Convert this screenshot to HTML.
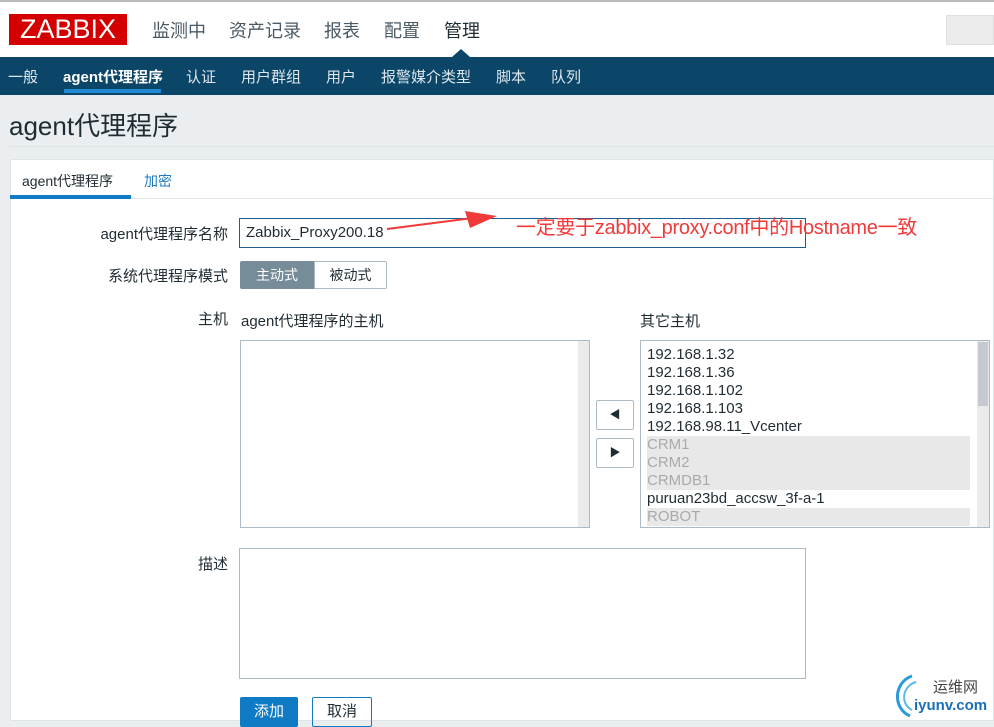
<!DOCTYPE html>
<html><head><meta charset="utf-8"><style>
*{box-sizing:border-box;margin:0;padding:0}
body{width:994px;height:721px;overflow:hidden;background:#ebeef0;font-family:"Liberation Sans","Noto Sans CJK SC",sans-serif;position:relative;color:#1f2c33}
.a{position:absolute}
.hdr{left:0;top:0;width:994px;height:57px;background:#fff;border-top:2px solid #bbb}
.logo{left:9px;top:14px;width:118px;height:31px;background:#d40000;color:#fff;font-size:27px;line-height:31px;text-align:center;letter-spacing:0px}
.top{top:17px;font-size:18px;color:#4a5a64}
.nav{left:0;top:57px;width:994px;height:38px;background:#0b4568}
.nav span{position:absolute;top:9px;font-size:15px;color:#dde7ee}
.tri{left:452px;top:49px;width:0;height:0;border-left:9px solid transparent;border-right:9px solid transparent;border-bottom:8px solid #0b4568}
.lbl{font-size:15px;text-align:right;width:200px;left:28px}
.box{border:1px solid #acbbc3;background:#fff}
.row{left:647px;width:323px;height:18px;font-size:15px;line-height:18px}
.g{background:#e8e8e8;color:#aaa}
.btn{border:1px solid #acbbc3;border-radius:2px;background:#fff;font-size:14px;text-align:center}
</style></head><body>
<div class="a hdr"></div>
<div class="a logo">ZABBIX</div>
<div class="a top" style="left:152px">监测中</div>
<div class="a top" style="left:229px">资产记录</div>
<div class="a top" style="left:324px">报表</div>
<div class="a top" style="left:384px">配置</div>
<div class="a top" style="left:444px;color:#1f2c33">管理</div>
<div class="a" style="left:946px;top:15px;width:48px;height:30px;background:#ebebeb;border:1px solid #e0e0e0"></div>
<div class="a tri"></div>
<div class="a nav">
<span style="left:8px">一般</span>
<span style="left:63px;color:#fff;font-weight:bold">agent代理程序</span>
<span style="left:186px">认证</span>
<span style="left:241px">用户群组</span>
<span style="left:326px">用户</span>
<span style="left:381px">报警媒介类型</span>
<span style="left:496px">脚本</span>
<span style="left:551px">队列</span>
<div class="a" style="left:64px;top:32px;width:97px;height:4px;background:#1f8ad2"></div>
</div>
<div class="a" style="left:9px;top:106px;font-size:26px;color:#1f2c33">agent代理程序</div>
<div class="a" style="left:9px;top:146px;width:985px;height:1px;background:#dfe4e7"></div>
<div class="a" style="left:10px;top:159px;width:984px;height:562px;background:#fff;border:1px solid #dfe4e7"></div>
<div class="a" style="left:10px;top:198px;width:984px;height:1px;background:#dfe4e7"></div>
<div class="a" style="left:22px;top:171px;font-size:14px">agent代理程序</div>
<div class="a" style="left:10px;top:195px;width:121px;height:4px;background:#0f7bc4"></div>
<div class="a" style="left:144px;top:171px;font-size:14px;color:#1f7ac0">加密</div>

<div class="a lbl" style="top:223px">agent代理程序名称</div>
<div class="a" style="left:239px;top:218px;width:567px;height:30px;border:1px solid #1d5e8c;background:#fff;font-size:15px;line-height:28px;padding-left:6px">Zabbix_Proxy200.18</div>
<svg class="a" style="left:385px;top:208px" width="120" height="25"><path d="M2 21 L88 10" stroke="#f03a3a" stroke-width="2"/><path d="M80 3 L112 8 L85 20 Z" fill="#f03a3a"/></svg>
<div class="a" style="left:516px;top:211px;font-size:20px;color:#f03a3a;letter-spacing:-0.3px">一定要于zabbix_proxy.conf中的Hostname一致</div>

<div class="a lbl" style="top:265px">系统代理程序模式</div>
<div class="a" style="left:240px;top:261px;width:74px;height:28px;background:#768d99;color:#fff;font-size:14px;line-height:28px;text-align:center;border-radius:2px 0 0 2px">主动式</div>
<div class="a" style="left:314px;top:261px;width:73px;height:28px;border:1px solid #acbbc3;font-size:14px;line-height:26px;text-align:center;border-radius:0 2px 2px 0">被动式</div>

<div class="a lbl" style="top:308px">主机</div>
<div class="a" style="left:241px;top:310px;font-size:15px">agent代理程序的主机</div>
<div class="a" style="left:640px;top:310px;font-size:15px">其它主机</div>
<div class="a box" style="left:240px;top:340px;width:350px;height:188px"><div class="a" style="right:0;top:0;width:11px;height:186px;background:#ebebeb"></div></div>
<div class="a btn" style="left:596px;top:400px;width:38px;height:30px;font-size:11px;line-height:28px">◀</div>
<div class="a btn" style="left:596px;top:438px;width:38px;height:30px;font-size:11px;line-height:28px">▶</div>
<div class="a box" style="left:640px;top:340px;width:350px;height:188px"><div class="a" style="right:0;top:0;width:12px;height:186px;background:#ebebeb"></div><div class="a" style="right:1px;top:1px;width:10px;height:64px;background:#c4cacf"></div></div>
<div class="a row" style="top:346px">192.168.1.32</div>
<div class="a row" style="top:364px">192.168.1.36</div>
<div class="a row" style="top:382px">192.168.1.102</div>
<div class="a row" style="top:400px">192.168.1.103</div>
<div class="a row" style="top:418px">192.168.98.11_Vcenter</div>
<div class="a row g" style="top:436px">CRM1</div>
<div class="a row g" style="top:454px">CRM2</div>
<div class="a row g" style="top:472px">CRMDB1</div>
<div class="a row" style="top:490px">puruan23bd_accsw_3f-a-1</div>
<div class="a row g" style="top:508px;height:18px">ROBOT</div>

<div class="a lbl" style="top:553px">描述</div>
<div class="a box" style="left:239px;top:548px;width:567px;height:131px"></div>
<div class="a" style="left:240px;top:697px;width:58px;height:30px;background:#0f7bc4;color:#fff;font-size:15px;line-height:30px;text-align:center;border-radius:2px">添加</div>
<div class="a" style="left:312px;top:697px;width:60px;height:30px;border:1px solid #0f7bc4;color:#1f2c33;font-size:15px;line-height:28px;text-align:center;border-radius:2px">取消</div>

<svg class="a" style="left:890px;top:672px" width="30" height="48"><path d="M22 4 C4 10 2 36 20 44" stroke="#2a9ad8" stroke-width="3" fill="none"/><path d="M26 10 C12 14 10 32 22 38" stroke="#5bb8e8" stroke-width="2" fill="none"/></svg>
<div class="a" style="left:933px;top:676px;font-size:15px;color:#444">运维网</div>
<div class="a" style="left:914px;top:697px;font-size:15px;font-weight:bold;color:#1a6fb5">iyunv.com</div>
</body></html>
